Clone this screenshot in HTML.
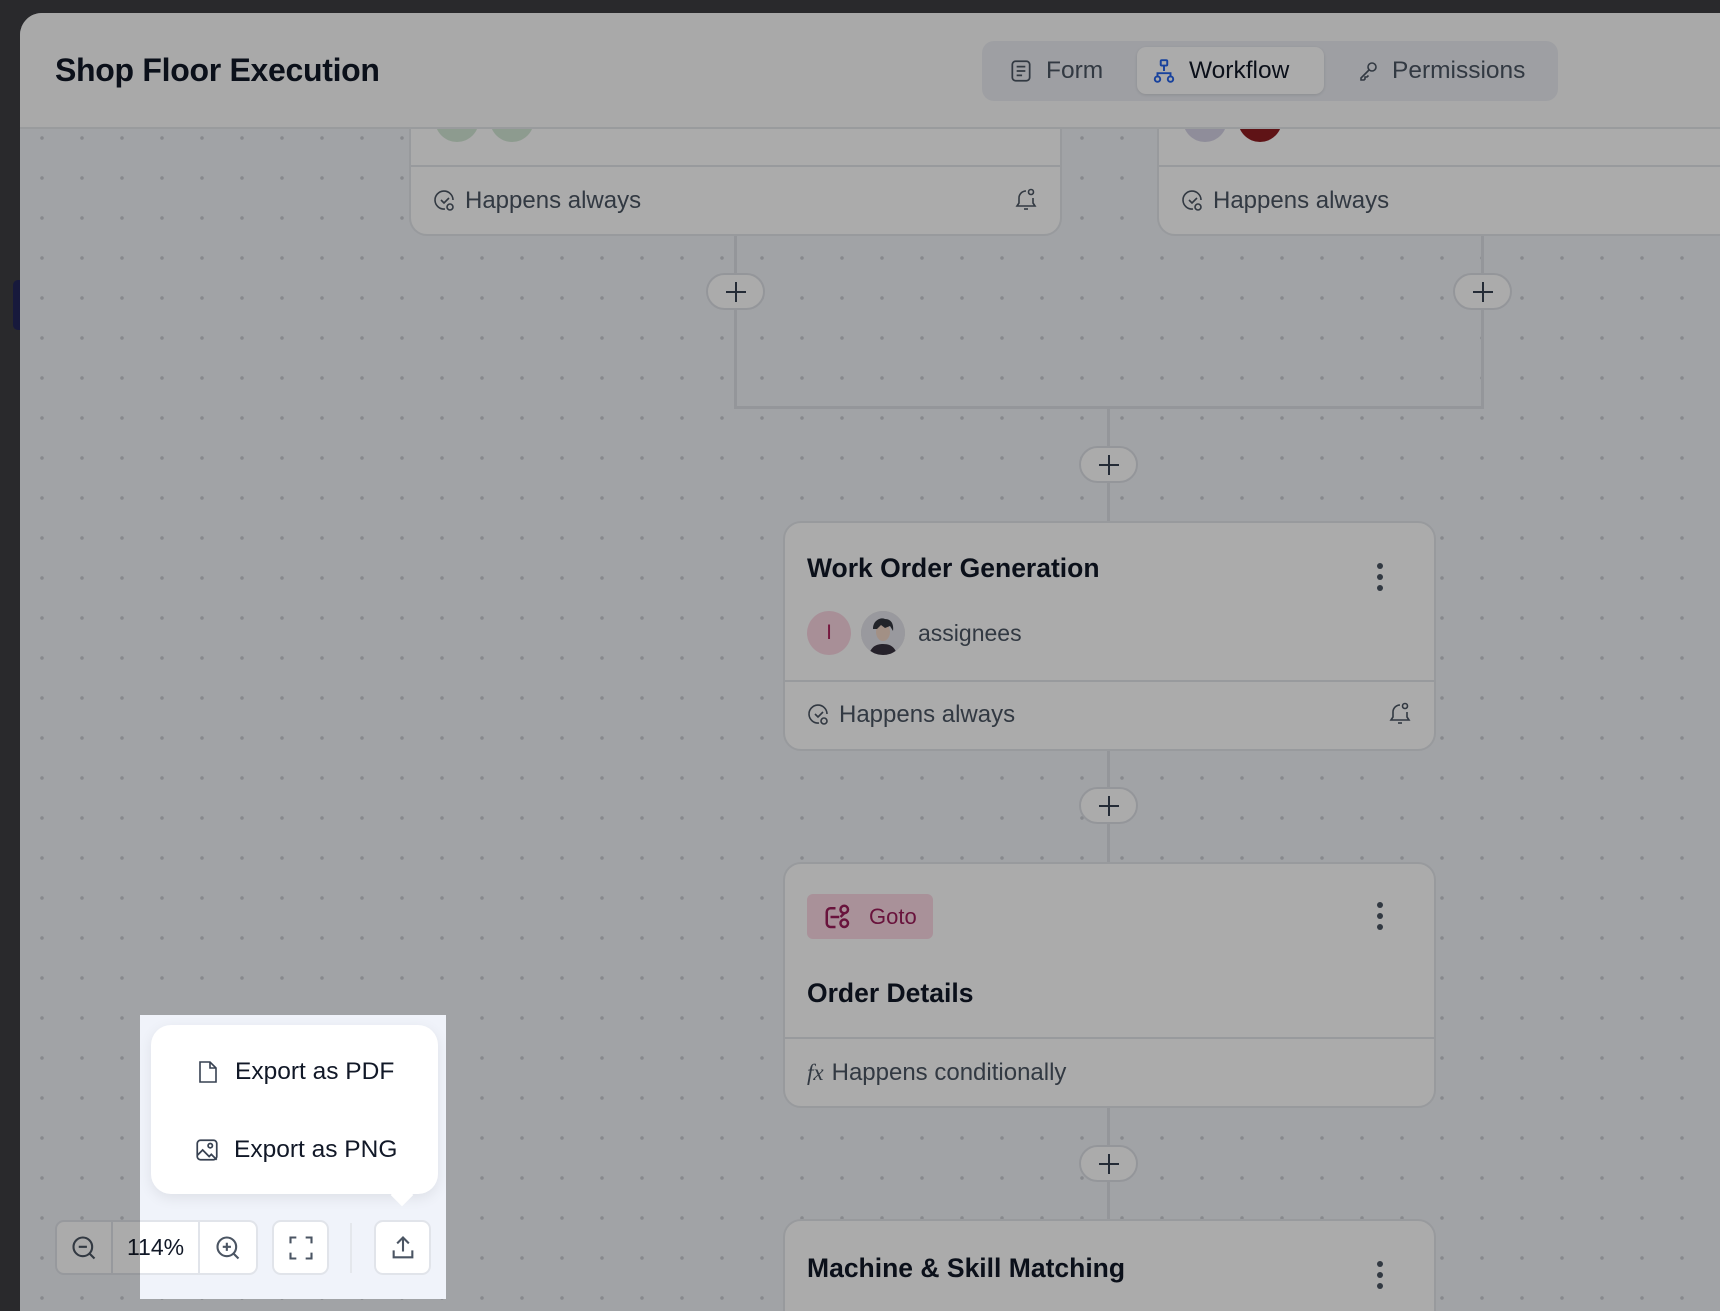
<!DOCTYPE html>
<html><head><meta charset="utf-8"><style>
*{box-sizing:border-box;margin:0;padding:0}
html,body{width:1720px;height:1311px;overflow:hidden}
body{background:#3e3e42;font-family:"Liberation Sans",sans-serif;position:relative}
.app{position:absolute;left:20px;top:13px;width:1700px;height:1298px;background:#f1f3f8;border-top-left-radius:22px;overflow:hidden;
background-image:radial-gradient(circle,#c9ccd3 1.6px,transparent 2px);background-size:40px 40px;background-position:2px -15px}
.hdr{position:absolute;left:0;top:0;width:1720px;height:116px;background:#fdfdfd;border-bottom:2px solid #e5e7eb;z-index:5}
.title{position:absolute;left:35px;top:39px;font-size:32px;font-weight:bold;color:#111827;letter-spacing:-0.3px}
.tabs{position:absolute;left:962px;top:28px;width:576px;height:60px;background:#eceef4;border-radius:12px}
.tab{position:absolute;top:6px;height:47px;display:flex;align-items:center;font-size:24.5px;color:#4b5563;gap:12px;padding:0 14px}
.tab.act{background:#fff;border-radius:9px;box-shadow:0 1px 3px rgba(0,0,0,.12);color:#111827}
.card{position:absolute;background:#fff;border:2px solid #e3e6eb;border-radius:18px}
.ct{position:absolute;left:22px;font-size:26.5px;font-weight:bold;color:#111827}
.div{position:absolute;left:0;right:0;height:2px;background:#e3e6eb}
.foot{position:absolute;left:22px;display:flex;align-items:center;gap:8px;font-size:24px;color:#4b5563}
.kebab{position:absolute;width:6px}
.kebab i{display:block;width:6px;height:6px;border-radius:50%;background:#4b5563;margin-bottom:5px}
.plus{position:absolute;width:59px;height:37px;background:#fff;border:2px solid #dde0e6;border-radius:19px;display:flex;align-items:center;justify-content:center}
.ln{position:absolute;background:#dde0e6}
.av{position:absolute;width:44px;height:44px;border-radius:50%}
.spot{position:absolute;left:140px;top:1015px;width:306px;height:284px;box-shadow:0 0 0 3000px rgba(0,0,0,.33);z-index:20;pointer-events:none}
.btn{position:absolute;height:55px;background:#fff;border:2px solid #e1e4ea;border-radius:9px;display:flex;align-items:center;justify-content:center}
</style></head><body>
<div style="position:absolute;left:13px;top:280px;width:9px;height:50px;background:#23265a;border-radius:5px 0 0 5px"></div>
<div class="app">
  <div class="hdr">
    <div class="title">Shop Floor Execution</div>
    <div class="tabs">
      <div class="tab" style="left:12px"><svg width="26" height="26" viewBox="0 0 24 24" fill="none" stroke="#4b5563" stroke-width="1.6"><rect x="4" y="3" width="16" height="18" rx="3"/><path d="M8 8h8M8 12h8M8 16h5"/></svg>Form</div>
      <div class="tab act" style="left:155px;width:187px"><svg width="26" height="26" viewBox="0 0 24 24" fill="none" stroke="#2563eb" stroke-width="1.8"><rect x="9" y="2" width="6" height="5" rx="1"/><path d="M12 7v5M6 17v-3h12v3"/><circle cx="6" cy="19.5" r="2.5"/><circle cx="18" cy="19.5" r="2.5"/></svg>Workflow</div>
      <div class="tab" style="left:360px"><svg width="24" height="24" viewBox="0 0 24 24" fill="none" stroke="#4b5563" stroke-width="1.6"><circle cx="16" cy="8" r="4"/><path d="M13 11l-8 8v2h3l1-1v-2h2l1.5-1.5"/></svg>Permissions</div>
    </div>
  </div>

  <div class="card" style="left:389px;top:40px;width:653px;height:183px">
    <div class="av" style="left:24px;top:43px;background:#d3e8d5"></div>
    <div class="av" style="left:79px;top:43px;background:#d3e8d5"></div>
    <div class="div" style="top:110px"></div>
    <div class="foot" style="top:132px"><svg width="24" height="24" viewBox="0 0 24 24" fill="none" stroke="#4b5563" stroke-width="1.6"><path d="M20 11a9 9 0 1 0-8 9"/><path d="M8 11l3 3 5-5"/><circle cx="17" cy="18" r="3"/></svg>Happens always</div>
    <svg style="position:absolute;right:22px;top:132px" width="24" height="26" viewBox="0 0 24 26" fill="none" stroke="#4b5563" stroke-width="1.6"><path d="M12 4a7 7 0 0 0-7 7v5l-2 3h18l-2-3v-5"/><circle cx="17" cy="5" r="2.5"/><path d="M10 22h4"/></svg>
  </div>
  <div class="card" style="left:1137px;top:40px;width:700px;height:183px">
    <div class="av" style="left:24px;top:43px;background:#d6d3e6"></div>
    <div class="av" style="left:79px;top:43px;background:#8e1d22"></div>
    <div class="div" style="top:110px"></div>
    <div class="foot" style="top:132px"><svg width="24" height="24" viewBox="0 0 24 24" fill="none" stroke="#4b5563" stroke-width="1.6"><path d="M20 11a9 9 0 1 0-8 9"/><path d="M8 11l3 3 5-5"/><circle cx="17" cy="18" r="3"/></svg>Happens always</div>
  </div>

  <div class="ln" style="left:714px;top:223px;width:3px;height:173px"></div>
  <div class="ln" style="left:1461px;top:223px;width:3px;height:173px"></div>
  <div class="ln" style="left:714px;top:393px;width:750px;height:3px"></div>
  <div class="ln" style="left:1087px;top:393px;width:3px;height:900px"></div>
  <div class="plus" style="left:686px;top:260px"><svg width="24" height="24" viewBox="0 0 24 24" stroke="#374151" stroke-width="2"><path d="M12 2v20M2 12h20"/></svg></div>
  <div class="plus" style="left:1433px;top:260px"><svg width="24" height="24" viewBox="0 0 24 24" stroke="#374151" stroke-width="2"><path d="M12 2v20M2 12h20"/></svg></div>
  <div class="plus" style="left:1059px;top:433px"><svg width="24" height="24" viewBox="0 0 24 24" stroke="#374151" stroke-width="2"><path d="M12 2v20M2 12h20"/></svg></div>
  <div class="plus" style="left:1059px;top:774px"><svg width="24" height="24" viewBox="0 0 24 24" stroke="#374151" stroke-width="2"><path d="M12 2v20M2 12h20"/></svg></div>
  <div class="plus" style="left:1059px;top:1132px"><svg width="24" height="24" viewBox="0 0 24 24" stroke="#374151" stroke-width="2"><path d="M12 2v20M2 12h20"/></svg></div>

  <div class="card" style="left:763px;top:508px;width:653px;height:230px">
    <div class="ct" style="top:30px">Work Order Generation</div>
    <div class="kebab" style="left:592px;top:40px"><i></i><i></i><i></i></div>
    <div class="av" style="left:22px;top:88px;background:#fbd5e2;color:#b0245f;font-size:21px;display:flex;align-items:center;justify-content:center">I</div>
    <div class="av" style="left:76px;top:88px;background:#ddd;overflow:hidden"><svg width="44" height="44" viewBox="0 0 44 44"><circle cx="22" cy="22" r="22" fill="#e5e5ec"/><path d="M8 44c2-9 8-11 14-11s12 2 14 11z" fill="#3a3440"/><ellipse cx="22" cy="21" rx="7" ry="9" fill="#f2d7c6"/><path d="M12 18c0-9 8-12 12-10 6 0 9 5 8 12l-3-5-5 2-4-3-4 4z" fill="#33363f"/></svg></div>
    <div style="position:absolute;left:133px;top:97px;font-size:23px;color:#4b5563">assignees</div>
    <div class="div" style="top:157px"></div>
    <div class="foot" style="top:178px"><svg width="24" height="24" viewBox="0 0 24 24" fill="none" stroke="#4b5563" stroke-width="1.6"><path d="M20 11a9 9 0 1 0-8 9"/><path d="M8 11l3 3 5-5"/><circle cx="17" cy="18" r="3"/></svg>Happens always</div>
    <svg style="position:absolute;right:22px;top:178px" width="24" height="26" viewBox="0 0 24 26" fill="none" stroke="#4b5563" stroke-width="1.6"><path d="M12 4a7 7 0 0 0-7 7v5l-2 3h18l-2-3v-5"/><circle cx="17" cy="5" r="2.5"/><path d="M10 22h4"/></svg>
  </div>

  <div class="card" style="left:763px;top:849px;width:653px;height:246px">
    <div style="position:absolute;left:22px;top:30px;width:126px;height:45px;background:#fcd9e5;border-radius:6px;display:flex;align-items:center;gap:16px;padding-left:16px;color:#9d1d5a;font-size:22px"><svg width="30" height="30" viewBox="0 0 24 24" fill="none" stroke="#9d1d5a" stroke-width="2"><path d="M10 5H6a3 3 0 0 0-3 3v9a3 3 0 0 0 3 3h4"/><path d="M6 12h7"/><circle cx="17" cy="6" r="3"/><circle cx="17" cy="17" r="3"/><path d="M14 12l3-3"/></svg>Goto</div>
    <div class="kebab" style="left:592px;top:38px"><i></i><i></i><i></i></div>
    <div class="ct" style="top:114px">Order Details</div>
    <div class="div" style="top:173px"></div>
    <div class="foot" style="top:195px"><span style="font-family:'Liberation Serif',serif;font-style:italic;font-size:23px">fx</span>Happens conditionally</div>
  </div>

  <div class="card" style="left:763px;top:1206px;width:653px;height:200px">
    <div class="ct" style="top:32px">Machine &amp; Skill Matching</div>
    <div class="kebab" style="left:592px;top:40px"><i></i><i></i><i></i></div>
  </div>

  <div style="position:absolute;left:120px;top:1002px;width:306px;height:284px;background:#f0f3fa"></div>

  <div class="btn" style="left:35px;top:1207px;width:203px;justify-content:flex-start">
    <div style="width:57px;height:100%;display:flex;align-items:center;justify-content:center;border-right:2px solid #e1e4ea"><svg width="28" height="28" viewBox="0 0 24 24" fill="none" stroke="#4b5563" stroke-width="1.8"><circle cx="11" cy="11" r="8"/><path d="M7.5 11h7M17 17l4 4"/></svg></div>
    <div style="width:87px;height:100%;display:flex;align-items:center;justify-content:center;border-right:2px solid #e1e4ea;font-size:23px;color:#111827">114%</div>
    <div style="width:57px;height:100%;display:flex;align-items:center;justify-content:center"><svg width="28" height="28" viewBox="0 0 24 24" fill="none" stroke="#4b5563" stroke-width="1.8"><circle cx="11" cy="11" r="8"/><path d="M7.5 11h7M11 7.5v7M17 17l4 4"/></svg></div>
  </div>
  <div class="btn" style="left:252px;top:1207px;width:57px"><svg width="28" height="28" viewBox="0 0 24 24" fill="none" stroke="#4b5563" stroke-width="1.8"><path d="M3 8V3h5M16 3h5v5M21 16v5h-5M8 21H3v-5"/></svg></div>
  <div style="position:absolute;left:330px;top:1210px;width:2px;height:50px;background:#e4e7ec"></div>
  <div class="btn" style="left:354px;top:1207px;width:57px"><svg width="28" height="28" viewBox="0 0 24 24" fill="none" stroke="#4b5563" stroke-width="1.8"><path d="M12 15V3M7 8l5-5 5 5M4 14v6h16v-6"/></svg></div>

  <div style="position:absolute;left:131px;top:1012px;width:287px;height:169px;background:#fff;border-radius:20px;box-shadow:0 4px 14px rgba(0,0,0,.08)">
    <div style="position:absolute;left:45px;top:33px;display:flex;align-items:center;gap:15px;font-size:24.5px;color:#111827"><svg width="24" height="26" viewBox="0 0 24 26" fill="none" stroke="#374151" stroke-width="1.6"><path d="M4 3h10l6 6v14H4z"/><path d="M14 3v6h6"/></svg>Export as PDF</div>
    <div style="position:absolute;left:43px;top:111px;display:flex;align-items:center;gap:14px;font-size:24.5px;color:#111827"><svg width="26" height="26" viewBox="0 0 24 24" fill="none" stroke="#374151" stroke-width="1.6"><rect x="3" y="3" width="18" height="18" rx="3"/><circle cx="15" cy="8" r="2"/><path d="M3 17l5-5 6 6 2-2 5 5"/></svg>Export as PNG</div>
    <div style="position:absolute;left:243px;top:162px;width:16px;height:16px;background:#fff;transform:rotate(45deg)"></div>
  </div>
</div>
<div class="spot"></div>
</body></html>
